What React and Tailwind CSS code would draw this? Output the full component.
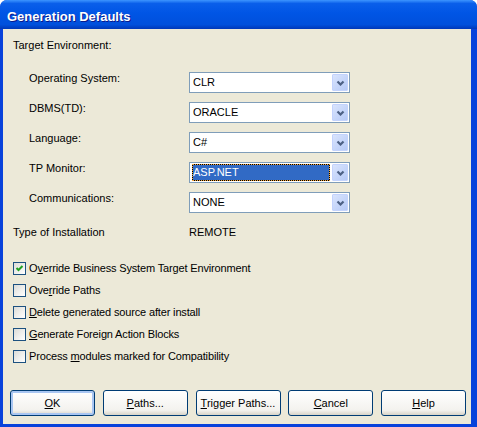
import React from 'react';

const combos = [
  { label: 'Operating System:', value: 'CLR' },
  { label: 'DBMS(TD):', value: 'ORACLE' },
  { label: 'Language:', value: 'C#' },
  { label: 'TP Monitor:', value: 'ASP.NET', selected: true },
  { label: 'Communications:', value: 'NONE' },
];

const checks = [
  { pre: 'O', key: 'v', post: 'erride Business System Target Environment', checked: true },
  { pre: 'Ove', key: 'r', post: 'ride Paths' },
  { pre: '', key: 'D', post: 'elete generated source after install' },
  { pre: '', key: 'G', post: 'enerate Foreign Action Blocks' },
  { pre: 'Process ', key: 'm', post: 'odules marked for Compatibility' },
];

const buttons = [
  { key: 'O', post: 'K', isDefault: true },
  { key: 'P', post: 'aths...' },
  { key: 'T', post: 'rigger Paths...' },
  { key: 'C', post: 'ancel' },
  { key: 'H', post: 'elp' },
];

function Chevron() {
  return (
    <svg width="9" height="6" viewBox="0 0 9 6">
      <path d="M1.5 1.5 L4.5 4.5 L7.5 1.5" fill="none" stroke="#4D6185" strokeWidth="2.2" />
    </svg>
  );
}

function Combo({ value, selected }) {
  return (
    <div className="h-[21px] w-[161px] border border-[#7F9DB9] bg-white">
      <div className="flex h-full p-[1px]">
        {selected ? (
          <div className="flex-1 pl-[1px] pr-[2px]">
            <div className="h-full bg-black border border-dotted border-[#F2A43A]">
              <div className="flex h-full items-center bg-[#316AC5] text-white">{value}</div>
            </div>
          </div>
        ) : (
          <div className="flex flex-1 items-center pl-[2px]">{value}</div>
        )}
        <div className="flex w-[16px] items-center justify-center rounded-[1px] border border-[#C3D3FD] bg-[linear-gradient(135deg,#D9E4FD,#B6CAF7)]">
          <Chevron />
        </div>
      </div>
    </div>
  );
}

function Checkbox({ checked }) {
  return (
    <div className="h-[13px] w-[13px] shrink-0 border border-[#1C5180] bg-[linear-gradient(135deg,#DCDCD7,#FFFFFF)]">
      {checked && (
        <svg width="11" height="11" viewBox="0 0 11 11">
          <path d="M2.5 5 L4.5 7 L8.5 3" fill="none" stroke="#21A121" strokeWidth="2" />
        </svg>
      )}
    </div>
  );
}

export default function App() {
  return (
    <div className="flex h-[427px] w-[477px] flex-col overflow-hidden rounded-t-[7px] bg-[#0842DB] font-['Liberation_Sans',Arial,sans-serif] text-[11px] leading-[13px] text-black">
      {/* title bar */}
      <div className="h-[29px] shrink-0 bg-[linear-gradient(180deg,#3D95FF_0%,#0A5FEA_12%,#0055E5_45%,#0050DC_85%,#0038B8_100%)] pl-[7px] pt-[10px]">
        <span className="text-[13px] font-bold text-white [text-shadow:1px_1px_0_#0A1A8A]">Generation Defaults</span>
      </div>

      <div className="mb-[3px] ml-[3px] mr-[6px] flex flex-1 flex-col bg-[#ECE9D8]">
        <div className="pl-[10px] pt-[10px]">Target Environment:</div>

        <div className="mt-[20px] grid grid-cols-[160px_161px] gap-y-[9px] pl-[26px]">
          {combos.map((c) => (
            <React.Fragment key={c.label}>
              <div className="h-[21px]">{c.label}</div>
              <Combo value={c.value} selected={c.selected} />
            </React.Fragment>
          ))}
        </div>

        <div className="mt-[13px] grid grid-cols-[176px_auto] pl-[10px]">
          <div>Type of Installation</div>
          <div>REMOTE</div>
        </div>

        <div className="mt-[23px] flex flex-col gap-[9px] pl-[10px]">
          {checks.map((c) => (
            <div key={c.post} className="flex h-[13px] items-center gap-[3px]">
              <Checkbox checked={c.checked} />
              <span className="tracking-[-0.15px]">
                {c.pre}
                <u>{c.key}</u>
                {c.post}
              </span>
            </div>
          ))}
        </div>

        <div className="mt-auto flex justify-between pb-[8px] pl-[7px] pr-[5px]">
          {buttons.map((b) => (
            <div
              key={b.post}
              className={
                b.isDefault
                  ? 'flex h-[26px] w-[85px] items-center justify-center rounded-[3px] border border-[#003C74] bg-[linear-gradient(180deg,#FFFFFF,#F3F2EE_80%,#D8D4C8)] shadow-[inset_0_0_0_2px_#A9C6F2]'
                  : 'flex h-[26px] w-[85px] items-center justify-center rounded-[3px] border border-[#003C74] bg-[linear-gradient(180deg,#FFFFFF,#F3F2EE_80%,#D8D4C8)]'
              }
            >
              <span>
                <u>{b.key}</u>
                {b.post}
              </span>
            </div>
          ))}
        </div>
      </div>
    </div>
  );
}
